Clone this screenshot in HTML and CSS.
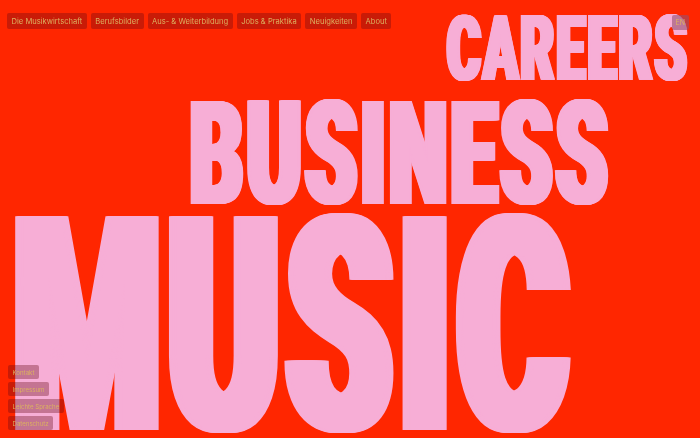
FILE: index.html
```html
<!DOCTYPE html>
<html lang="de">
<head>
<meta charset="utf-8">
<title>Music Business Careers</title>
<link rel="stylesheet" href="styles.css">
</head>
<body>
<header class="topbar">
  <nav class="mainnav">
    <a class="chip" href="#">Die Musikwirtschaft</a>
    <a class="chip" href="#">Berufsbilder</a>
    <a class="chip" href="#">Aus- &amp; Weiterbildung</a>
    <a class="chip" href="#">Jobs &amp; Praktika</a>
    <a class="chip" href="#">Neuigkeiten</a>
    <a class="chip" href="#">About</a>
  </nav>
  <a class="chip lang" href="#">EN</a>
</header>
<main class="hero">
  <h1 class="title">
    <span class="word careers">CAREERS</span>
    <span class="word business">BUSINESS</span>
    <span class="word music">MUSIC</span>
  </h1>
</main>
<footer class="footlinks">
  <a class="chip small" href="#">Kontakt</a>
  <a class="chip small" href="#">Impressum</a>
  <a class="chip small" href="#">Leichte Sprache</a>
  <a class="chip small" href="#">Datenschutz</a>
</footer>
</body>
</html>
```

FILE: styles.css
```css
html, body {
  margin: 0;
  padding: 0;
  overflow: hidden;
}
body {
  background: #ff2600;
  width: 700px;
  height: 438px;
  font-family: "Inter", "Noto Sans", sans-serif;
}
.topbar {
  position: fixed;
  top: 0;
  left: 0;
  right: 0;
  display: flex;
  justify-content: space-between;
  align-items: flex-start;
  padding: 13px 11px 0 7px;
  z-index: 2;
}
.mainnav {
  display: flex;
  gap: 4px;
}
.chip {
  display: flex;
  align-items: center;
  height: 16px;
  padding: 0 4.5px;
  border-radius: 2px;
  background: rgba(100, 10, 20, 0.35);
  color: #dcb060;
  font-size: 7.6px;
  text-decoration: none;
  white-space: nowrap;
}
.lang {
  margin-top: 2px;
  height: 15px;
  padding: 0 4px;
  font-size: 7px;
  background: rgba(150, 80, 110, 0.6);
}
.hero {
  padding-top: 18.1px;
}
.title {
  margin: 0;
  font-family: "Roboto", "Liberation Sans", sans-serif;
  font-weight: 900;
  color: #f7aed6;
  display: flex;
  flex-direction: column;
  align-items: flex-start;
}
.word {
  display: block;
  line-height: 0.711;
  transform-origin: left center;
  white-space: nowrap;
  text-shadow:
    0.008em 0 0 #f7aed6,
    -0.008em 0 0 #f7aed6,
    0.016em 0 0 #f7aed6,
    -0.016em 0 0 #f7aed6,
    0.024em 0 0 #f7aed6,
    -0.024em 0 0 #f7aed6,
    0.032em 0 0 #f7aed6,
    -0.032em 0 0 #f7aed6,
    0.040em 0 0 #f7aed6,
    -0.040em 0 0 #f7aed6,
    0.047em 0 0 #f7aed6,
    -0.047em 0 0 #f7aed6;
  letter-spacing: 0.049em;
}
.careers {
  font-size: 90px;
  margin-left: 446.6px;
  transform: scaleX(0.569);
}
.business {
  font-size: 145px;
  margin-left: 189.5px;
  margin-top: 20.8px;
  transform: scaleX(0.5648);
}
.music {
  font-size: 300.7px;
  margin-left: 13.9px;
  margin-top: 15.2px;
  transform: scaleX(0.554);
}
.footlinks {
  position: fixed;
  left: 8px;
  bottom: 8px;
  display: flex;
  flex-direction: column;
  align-items: flex-start;
  gap: 3px;
  z-index: 2;
}
.small {
  height: 14px;
  padding: 0 4.5px;
  font-size: 6.1px;
}
```
